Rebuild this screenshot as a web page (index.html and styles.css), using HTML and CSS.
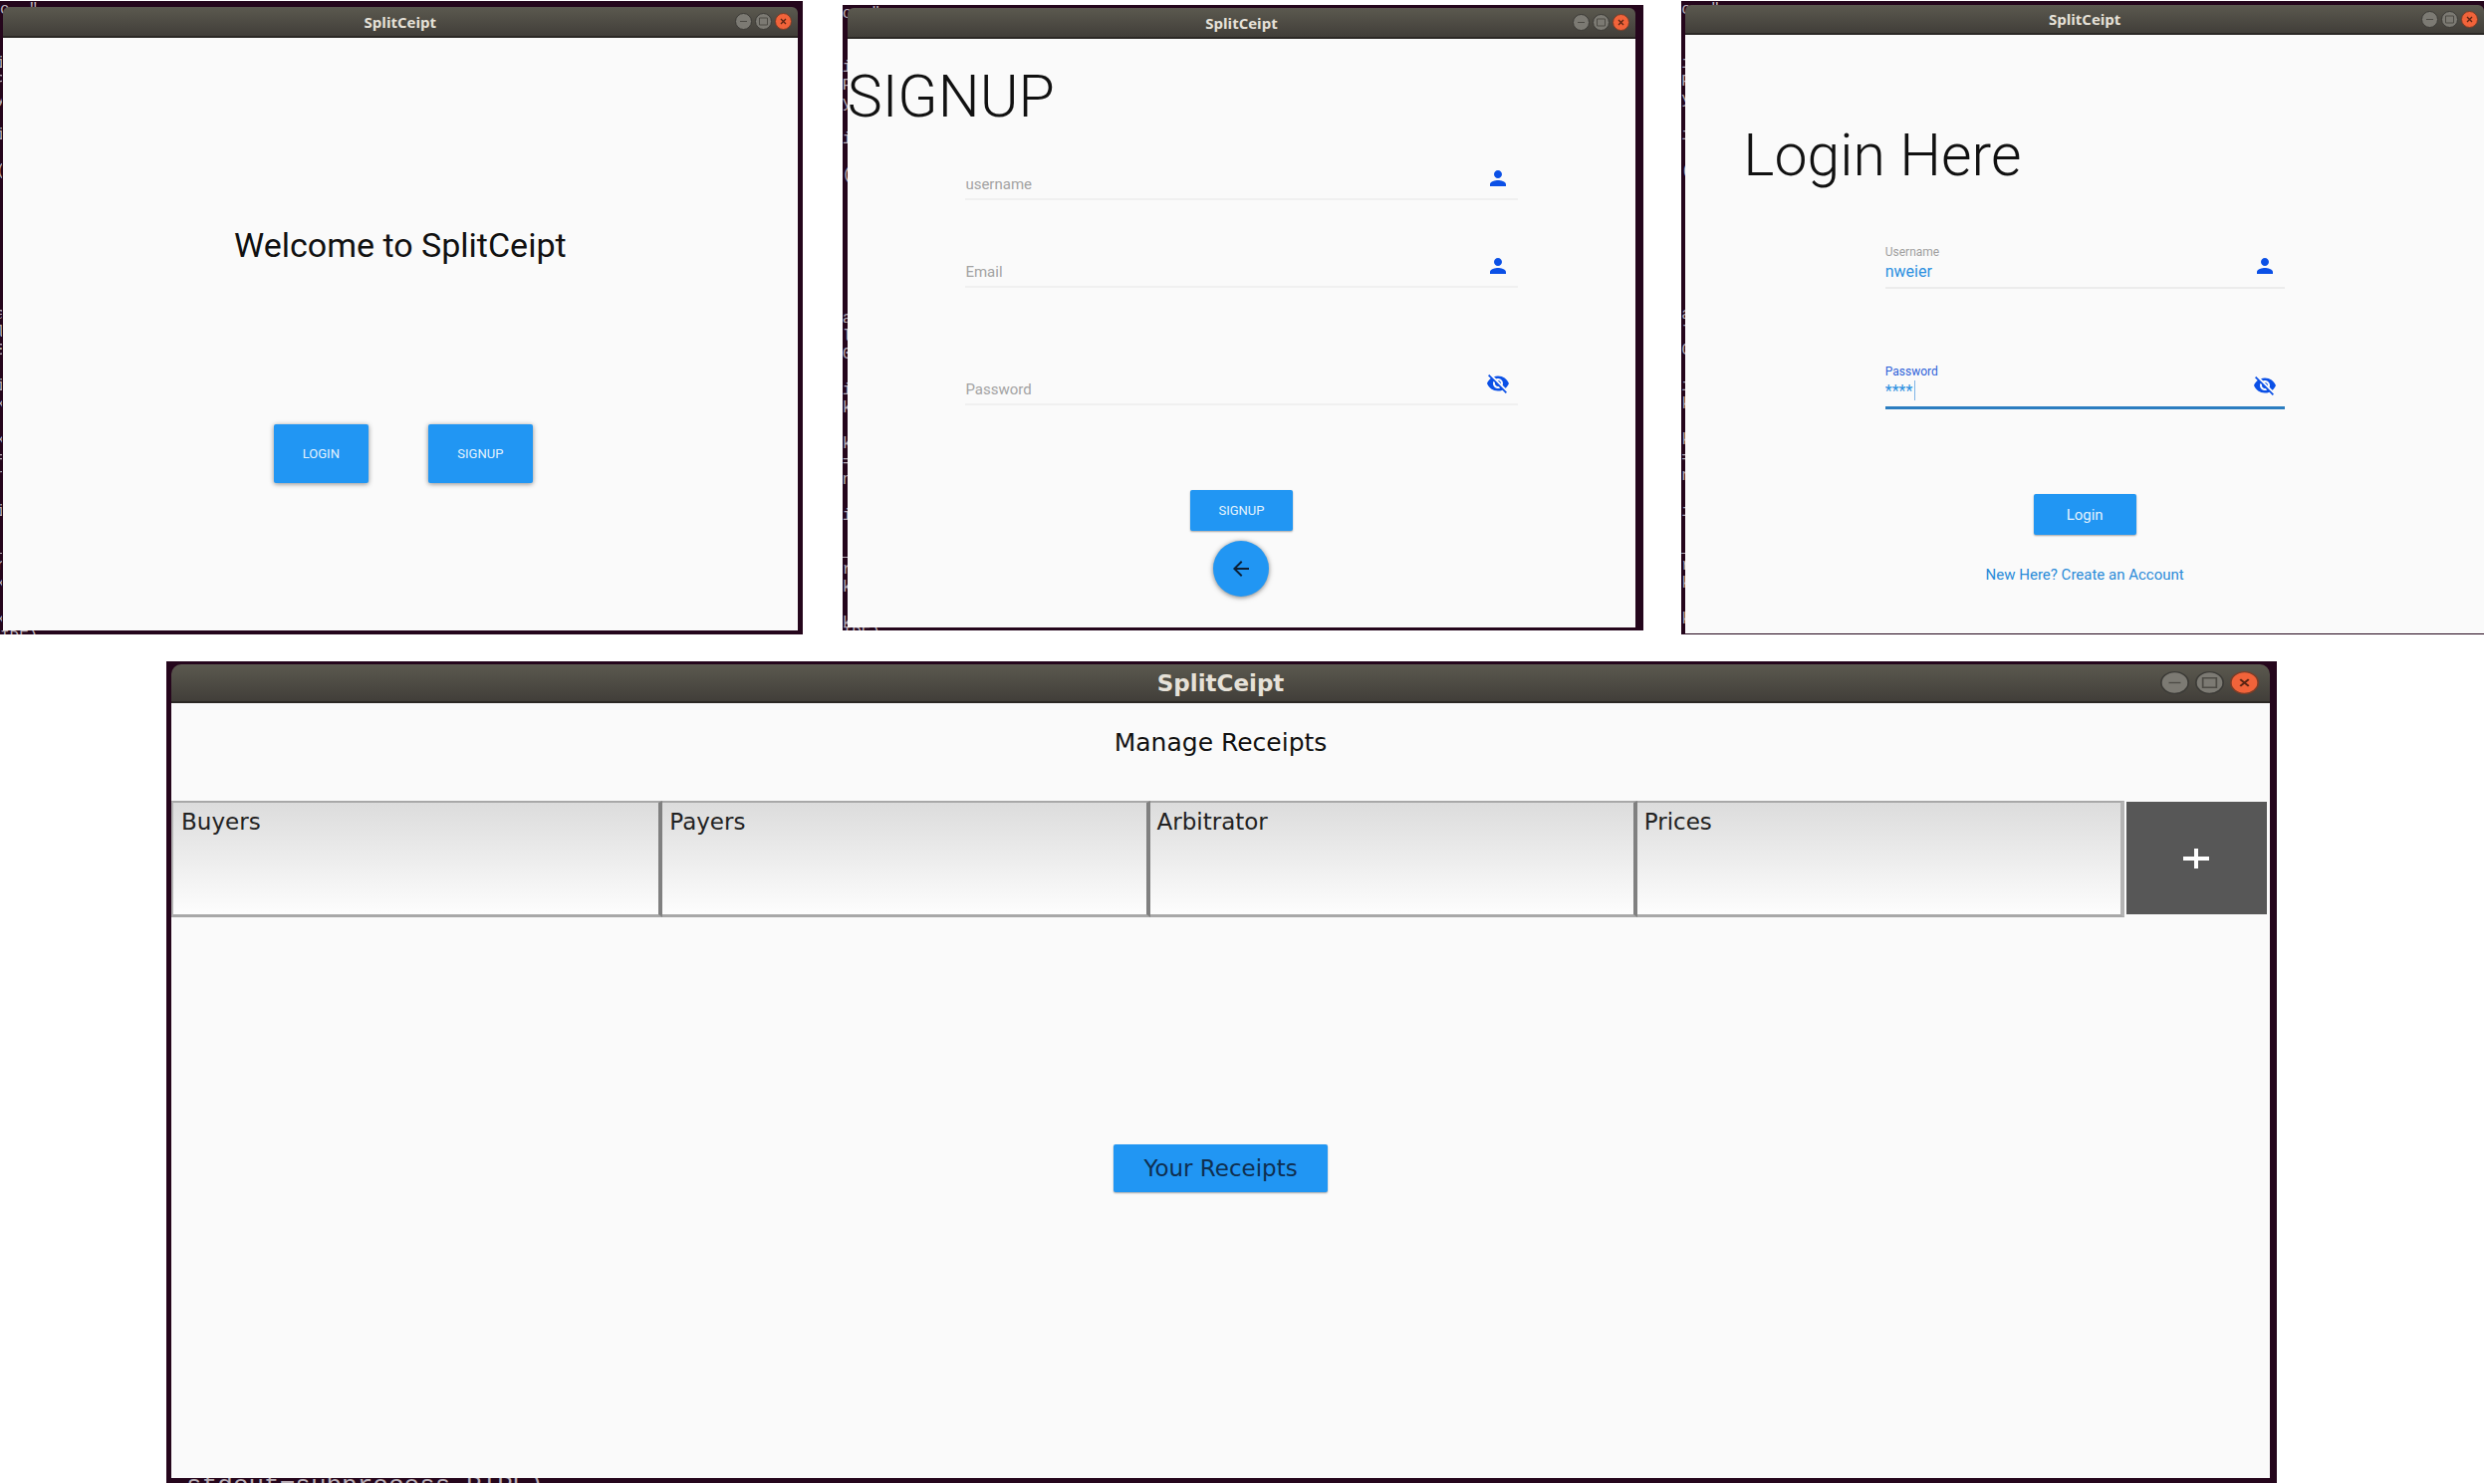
FILE: index.html
```html
<!DOCTYPE html>
<html lang="en">
<head>
<meta charset="utf-8">
<title>SplitCeipt</title>
<link rel="stylesheet" href="styles.css">
</head>
<body>
<svg class="sprite" aria-hidden="true">
  <symbol id="win-min" viewBox="0 0 17 17" preserveAspectRatio="none">
    <circle cx="8.5" cy="8.5" r="8" fill="#7c7a73" stroke="#3c3b37"/>
    <path d="M5 8.5h7" stroke="#4d4b45" fill="none"/>
  </symbol>
  <symbol id="win-max" viewBox="0 0 17 17" preserveAspectRatio="none">
    <circle cx="8.5" cy="8.5" r="8" fill="#7c7a73" stroke="#3c3b37"/>
    <path d="M4.500 5h8v7h-8z" stroke="#4d4b45" fill="none"/>
  </symbol>
  <symbol id="win-close" viewBox="0 0 17 17" preserveAspectRatio="none">
    <circle cx="8.5" cy="8.5" r="8" fill="#f1633a" stroke="#7a3d28"/>
    <path d="M6 6l5 5M11 6l-5 5" stroke="#5a2413" stroke-width="1.300" fill="none"/>
  </symbol>
  <symbol id="person" viewBox="0 0 24 24">
    <path d="M12 12c2.210 0 4-1.790 4-4s-1.790-4-4-4-4 1.790-4 4 1.790 4 4 4zm0 2c-2.670 0-8 1.340-8 4v2h16v-2c0-2.660-5.330-4-8-4z"/>
  </symbol>
  <symbol id="eye-off" viewBox="0 0 24 24">
    <path d="M12 7c2.760 0 5 2.240 5 5 0 .65-.13 1.260-.36 1.830l2.920 2.920c1.510-1.260 2.700-2.890 3.430-4.750-1.730-4.390-6-7.500-11-7.500-1.400 0-2.740.25-3.980.7l2.160 2.160C10.740 7.130 11.350 7 12 7zM2 4.270l2.280 2.280.46.46C3.080 8.300 1.780 10.020 1 12c1.730 4.390 6 7.500 11 7.500 1.550 0 3.030-.3 4.380-.84l.42.42L19.730 22 21 20.730 3.270 3 2 4.270zM7.530 9.800l1.550 1.550c-.05.21-.08.43-.08.65 0 1.660 1.340 3 3 3 .22 0 .44-.03.65-.08l1.550 1.550c-.67.33-1.410.53-2.200.53-2.760 0-5-2.240-5-5 0-.79.2-1.530.53-2.200zm4.310-.78l3.150 3.150.02-.16c0-1.660-1.340-3-3-3l-.17.01z"/>
  </symbol>
  <symbol id="back" viewBox="0 0 24 24">
    <path d="M20 11H7.830l5.590-5.590L12 4l-8 8 8 8 1.410-1.410L7.830 13H20v-2z"/>
  </symbol>
</svg>

<main class="board">
  <div class="row">
    <section class="desktop desktop-welcome">
      <pre class="terminal terminal-first" aria-hidden="true">o  "</pre>
      <pre class="terminal terminal-edge" aria-hidden="true">i
P
y

i

(







a
l
0

i
k

k
=
n

i

_
r
k

k</pre>
      <pre class="terminal terminal-last" aria-hidden="true">IDE)</pre>
      <div class="window">
        <header class="titlebar">
          <span class="title">SplitCeipt</span>
          <span class="controls">
            <button class="control" aria-label="Minimize"><svg><use href="#win-min"/></svg></button>
            <button class="control" aria-label="Maximize"><svg><use href="#win-max"/></svg></button>
            <button class="control" aria-label="Close"><svg><use href="#win-close"/></svg></button>
          </span>
        </header>
        <div class="screen welcome">
          <h1 class="greeting">Welcome to SplitCeipt</h1>
          <div class="choices">
            <button class="btn btn-tall">LOGIN</button>
            <button class="btn btn-tall btn-signup">SIGNUP</button>
          </div>
        </div>
      </div>
    </section>

    <section class="desktop desktop-signup">
      <pre class="terminal terminal-first" aria-hidden="true">o  "</pre>
      <pre class="terminal terminal-edge" aria-hidden="true">i
P
y

i

(







a
l
0

i
k

k
=
n

i

_
r
k

k</pre>
      <pre class="terminal terminal-last" aria-hidden="true">IDE)</pre>
      <div class="window">
        <header class="titlebar">
          <span class="title">SplitCeipt</span>
          <span class="controls">
            <button class="control" aria-label="Minimize"><svg><use href="#win-min"/></svg></button>
            <button class="control" aria-label="Maximize"><svg><use href="#win-max"/></svg></button>
            <button class="control" aria-label="Close"><svg><use href="#win-close"/></svg></button>
          </span>
        </header>
        <form class="screen signup">
          <h1 class="headline">SIGNUP</h1>
          <div class="field">
            <input type="text" placeholder="username" aria-label="username">
            <svg class="icon"><use href="#person"/></svg>
          </div>
          <div class="field">
            <input type="email" placeholder="Email" aria-label="Email">
            <svg class="icon"><use href="#person"/></svg>
          </div>
          <div class="field field-last">
            <input type="password" placeholder="Password" aria-label="Password">
            <svg class="icon"><use href="#eye-off"/></svg>
          </div>
          <button type="button" class="btn submit">SIGNUP</button>
          <button type="button" class="fab" aria-label="Back"><svg class="icon"><use href="#back"/></svg></button>
        </form>
      </div>
    </section>

    <section class="desktop desktop-login">
      <pre class="terminal terminal-first" aria-hidden="true">o  "</pre>
      <pre class="terminal terminal-edge" aria-hidden="true">i
P
y

i

(







a
l
0

i
k

k
=
n

i

_
r
k

k</pre>
      <div class="window">
        <header class="titlebar">
          <span class="title">SplitCeipt</span>
          <span class="controls">
            <button class="control" aria-label="Minimize"><svg><use href="#win-min"/></svg></button>
            <button class="control" aria-label="Maximize"><svg><use href="#win-max"/></svg></button>
            <button class="control" aria-label="Close"><svg><use href="#win-close"/></svg></button>
          </span>
        </header>
        <form class="screen login">
          <h1 class="headline">Login Here</h1>
          <div class="filled">
            <div class="entry">
              <label for="login-user">Username</label>
              <input id="login-user" type="text" value="nweier">
            </div>
            <svg class="icon"><use href="#person"/></svg>
          </div>
          <div class="filled filled-active">
            <div class="entry">
              <label for="login-pass">Password</label>
              <input id="login-pass" type="text" value="****">
            </div>
            <svg class="icon"><use href="#eye-off"/></svg>
          </div>
          <button type="button" class="btn submit">Login</button>
          <a class="create" href="#">New Here? Create an Account</a>
        </form>
      </div>
    </section>
  </div>

  <section class="desktop desktop-receipts">
    <pre class="terminal terminal-top" aria-hidden="true">ff   format</pre>
    <pre class="terminal terminal-bottom" aria-hidden="true">stdout=subprocess.PIPE)</pre>
    <div class="window">
      <header class="titlebar titlebar-large">
        <span class="title">SplitCeipt</span>
        <span class="controls">
          <button class="control" aria-label="Minimize"><svg><use href="#win-min"/></svg></button>
          <button class="control" aria-label="Maximize"><svg><use href="#win-max"/></svg></button>
          <button class="control" aria-label="Close"><svg><use href="#win-close"/></svg></button>
        </span>
      </header>
      <div class="screen receipts">
        <h1 class="manage">Manage Receipts</h1>
        <div class="entries">
          <textarea aria-label="Buyers">Buyers</textarea>
          <textarea aria-label="Payers">Payers</textarea>
          <textarea aria-label="Arbitrator">Arbitrator</textarea>
          <textarea aria-label="Prices">Prices</textarea>
          <button class="add" aria-label="Add"><svg viewBox="0 0 26 20"><path d="M0 10h26M13 0v20" fill="none" stroke="#fff" stroke-width="4"/></svg></button>
        </div>
        <button class="btn your-receipts">Your Receipts</button>
      </div>
    </div>
  </section>
</main>
</body>
</html>
```
FILE: styles.css
```css
* {
  box-sizing: border-box;
}

body {
  margin: 0;
  background: #fff;
  color: #111;
  font-family: Roboto, "Liberation Sans", sans-serif;
}

button,
input,
textarea {
  margin: 0;
  padding: 0;
  border: 0;
  outline: 0;
  background: none;
  font: inherit;
}

h1 {
  margin: 0;
  font-weight: 400;
}

.sprite {
  display: none;
}

.board {
  padding-top: 1px;
}

.row {
  display: grid;
  grid-template-columns: 806fr 805fr 806fr;
  column-gap: 39px;
}

/* Terminal wallpaper behind each window */
.desktop {
  position: relative;
  display: flex;
  overflow: hidden;
  background: #25061c;
}

.desktop-welcome {
  padding: 6px 5px 4px 3px;
}

.desktop-signup {
  margin: 4px -1px 4px 1px;
  padding: 3px 8px 3px 5px;
}

.desktop-login {
  padding: 4px 0 1px 4px;
}

.desktop-receipts {
  margin: 27px 8.34% 0 6.7%;
  padding: 3px 7px 5px 5px;
}

.terminal {
  position: absolute;
  left: 0;
  margin: 0;
  color: #b9aeb6;
  font: 16px/18px "Liberation Mono", monospace;
}

.terminal-first {
  top: 0;
}

.terminal-edge {
  top: 54px;
  width: 6px;
  overflow: hidden;
}

.terminal-last {
  bottom: -12px;
}

.desktop-welcome .terminal-edge {
  left: -4px;
}

.terminal-top {
  top: -16px;
  left: 8px;
  font-size: 22px;
}

.terminal-bottom {
  bottom: -16px;
  left: 20px;
  font-size: 26px;
  line-height: 26px;
}

.window {
  position: relative;
  display: flex;
  flex: 1;
  flex-direction: column;
  min-width: 0;
}

.titlebar {
  display: grid;
  grid-template-columns: 1fr auto 1fr;
  align-items: center;
  height: 31px;
  padding: 0 6px;
  border-bottom: 2px solid #2b2825;
  border-radius: 6px 6px 0 0;
  background: linear-gradient(#5b594f, #413e39);
  color: #e6e1d8;
  font: bold 15px/18px "Open Sans", "DejaVu Sans", sans-serif;
}

.desktop-login .titlebar {
  height: 30px;
}

.title {
  grid-column: 2;
}

.controls {
  display: flex;
  justify-content: flex-end;
  gap: 3px;
}

.control {
  width: 17px;
  height: 17px;
}

.control svg {
  display: block;
  width: 100%;
  height: 100%;
}

.titlebar-large {
  height: 39px;
  padding: 0 11px;
  border-radius: 10px 10px 0 0;
  font: bold 23px/26px "DejaVu Sans", sans-serif;
}

.titlebar-large .controls {
  gap: 6px;
}

.titlebar-large .control {
  width: 29px;
  height: 23px;
}

.screen {
  display: flex;
  flex: 1;
  flex-direction: column;
  align-items: center;
  background: #fafafa;
}

.btn {
  min-width: 103px;
  height: 41px;
  border-radius: 2px;
  background: #2196f3;
  box-shadow: 0 1px 2px rgba(0, 0, 0, 0.35);
  color: #e3f2fd;
  font-size: 13px;
}

.icon {
  flex: none;
  width: 24px;
  height: 24px;
  fill: #0b50e6;
}

/* Welcome */
.welcome {
  padding: 188px 0 148px;
}

.greeting {
  font-size: 34px;
  line-height: 40px;
}

.choices {
  display: flex;
  gap: 60px;
  margin-top: 160px;
  padding-left: 6px;
}

.btn-tall {
  min-width: 95px;
  height: 59px;
  box-shadow: 0 1px 5px rgba(0, 0, 0, 0.45);
}

.btn-signup {
  min-width: 105px;
}

/* Sign up and log in */
.headline {
  align-self: stretch;
  font-size: 59px;
  font-weight: 300;
  line-height: 66px;
}

.signup {
  padding: 25px 0 31px;
}

.field {
  display: flex;
  width: 70%;
  height: 36px;
  margin-top: 52px;
  padding-top: 2px;
  padding-right: 8px;
  border-bottom: 2px solid #f0f0f0;
}

.headline + .field {
  margin-top: 35px;
}

.field-last {
  margin-top: 82px;
}

.field input {
  flex: 1;
  min-width: 0;
  padding-top: 4px;
  font-size: 15px;
}

.field input::placeholder {
  color: #a3a3a3;
}

.submit {
  margin-top: 85px;
}

.fab {
  display: grid;
  place-items: center;
  width: 56px;
  height: 56px;
  margin-top: 10px;
  border-radius: 50%;
  background: #2196f3;
  box-shadow: 0 1px 5px rgba(0, 0, 0, 0.5);
}

.fab .icon {
  fill: #0c2036;
}

.login {
  padding: 88px 0 50px;
}

.login .headline {
  padding-left: 58px;
}

.filled {
  display: flex;
  align-items: center;
  width: 50%;
  margin-top: 57px;
  padding-right: 8px;
  border-bottom: 2px solid #ececec;
}

.entry {
  display: flex;
  flex: 1;
  flex-direction: column;
  gap: 2px;
  min-width: 0;
  padding-bottom: 6px;
  color: #9e9e9e;
  font-size: 12px;
  line-height: 14px;
}

.entry input {
  height: 20px;
  color: #2a8fe0;
  font-size: 16px;
}

.filled-active {
  margin-top: 76px;
  border-bottom: 3px solid #2b7dc0;
}

.filled-active .entry {
  color: #2f62d9;
}

/* Text cursor after the masked password */
.filled-active input {
  background: linear-gradient(#7fb4e6, #7fb4e6) 29px 0 / 1px 20px no-repeat;
}

.login .btn {
  font-size: 15px;
}

.create {
  margin-top: 31px;
  color: #2a8bd8;
  font-size: 15px;
  line-height: 18px;
  text-decoration: none;
}

/* Manage receipts */
.receipts {
  padding: 26px 0 287px;
  font: 23px/28px "DejaVu Sans", sans-serif;
}

.manage {
  font-size: 25px;
  line-height: 28px;
}

.entries {
  display: grid;
  grid-template-columns: 493fr repeat(3, 489fr) 146fr;
  align-self: stretch;
  margin-top: 44px;
}

.entries textarea {
  height: 117px;
  padding: 5px 7px;
  border: solid #a8a8a8;
  border-width: 2px 4px 3px 0;
  border-right-color: #808080;
  background: linear-gradient(#dcdcdc, #fdfdfd);
  color: #222;
  resize: none;
}

.entries textarea:first-child {
  padding-left: 8px;
  border-left: 2px solid #b4b4b4;
}

.entries textarea:last-of-type {
  border-right-color: #b4b4b4;
}

.add {
  display: grid;
  place-items: center;
  margin: 1px 3px 3px 2px;
  background: #575757;
}

.add svg {
  width: 26px;
  height: 20px;
}

.your-receipts {
  min-width: 215px;
  height: 48px;
  margin-top: 228px;
  color: #0f2f50;
  font-size: 23px;
}
```
